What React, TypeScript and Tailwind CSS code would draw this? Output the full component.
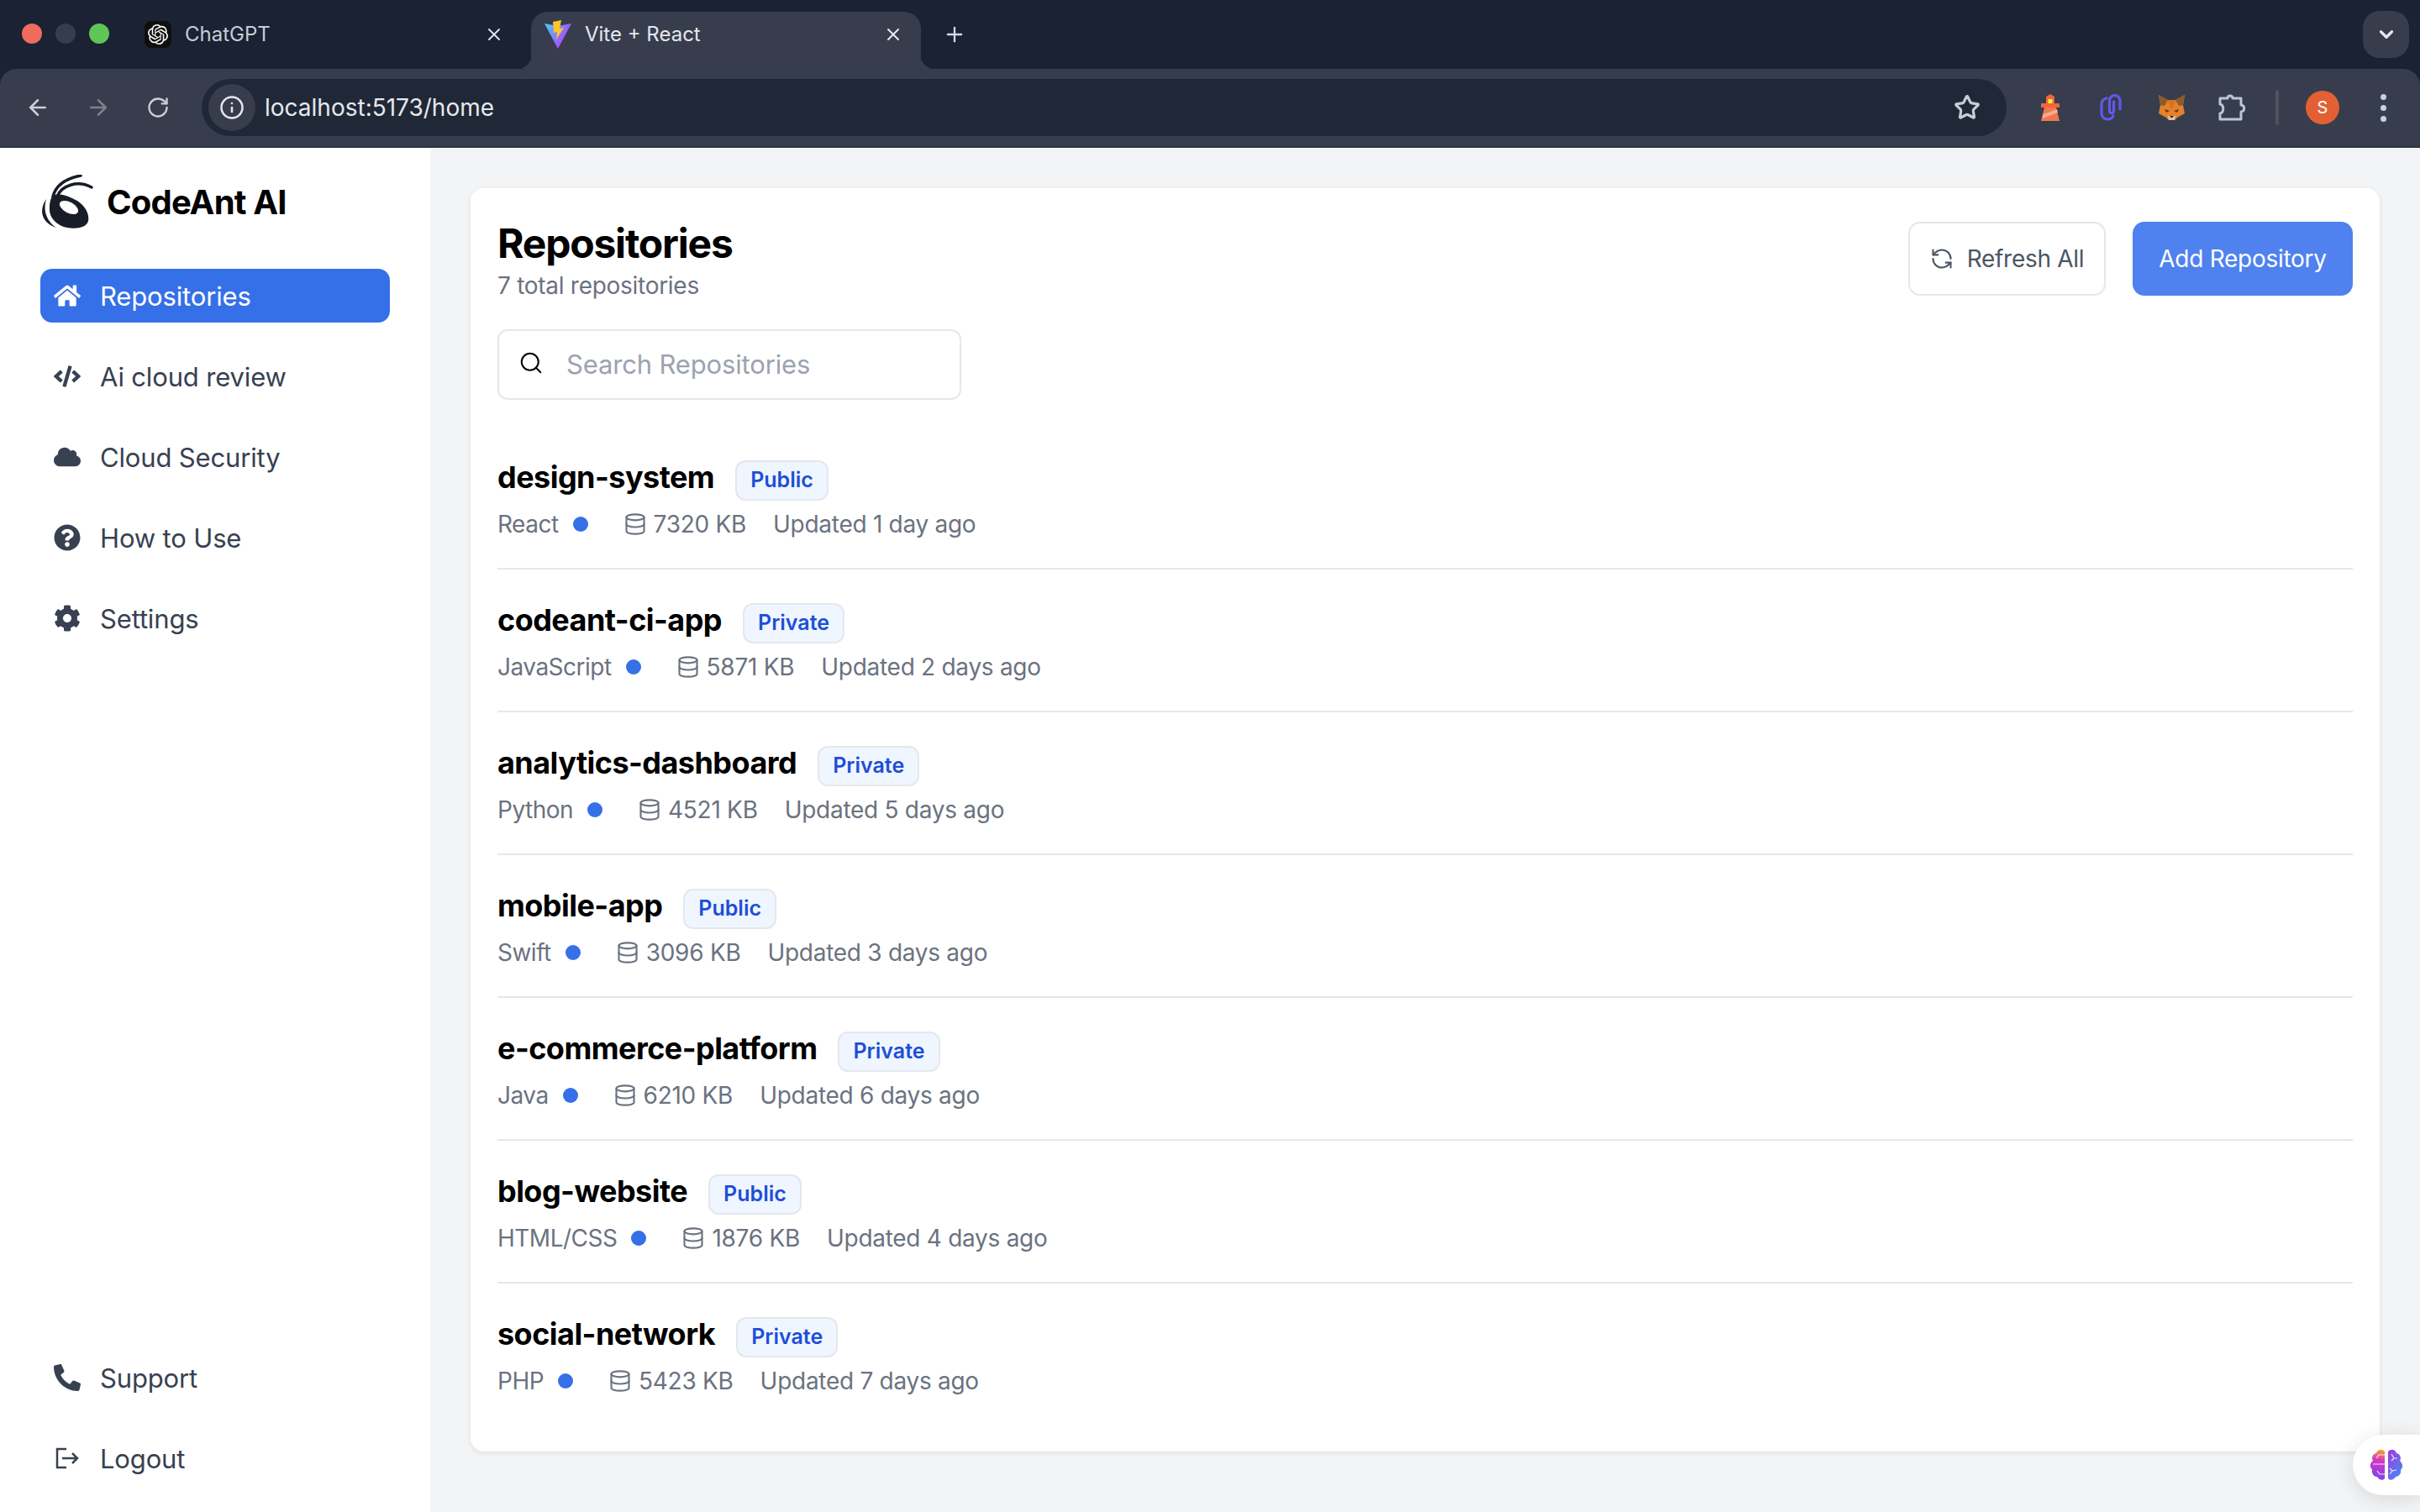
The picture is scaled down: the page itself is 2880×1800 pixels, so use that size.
import { ArrowLeft, ArrowRight, ChevronDown, Database, Info, Plus, RefreshCcw, RotateCw, Search, Star, X } from "lucide-react";
import { FaCloud, FaCode, FaCog, FaHome, FaPhoneAlt, FaQuestionCircle } from "react-icons/fa";
import { SiOpenai } from "react-icons/si";

const repos = [
  { name: "design-system", vis: "Public", lang: "React", size: "7320 KB", updated: "Updated 1 day ago" },
  { name: "codeant-ci-app", vis: "Private", lang: "JavaScript", size: "5871 KB", updated: "Updated 2 days ago" },
  { name: "analytics-dashboard", vis: "Private", lang: "Python", size: "4521 KB", updated: "Updated 5 days ago" },
  { name: "mobile-app", vis: "Public", lang: "Swift", size: "3096 KB", updated: "Updated 3 days ago" },
  { name: "e-commerce-platform", vis: "Private", lang: "Java", size: "6210 KB", updated: "Updated 6 days ago" },
  { name: "blog-website", vis: "Public", lang: "HTML/CSS", size: "1876 KB", updated: "Updated 4 days ago" },
  { name: "social-network", vis: "Private", lang: "PHP", size: "5423 KB", updated: "Updated 7 days ago" },
];

const navTop = [
  { label: "Repositories", icon: <FaHome size={32} />, active: true },
  { label: "Ai cloud review", icon: <FaCode size={32} /> },
  { label: "Cloud Security", icon: <FaCloud size={32} /> },
  { label: "How to Use", icon: <FaQuestionCircle size={32} /> },
  { label: "Settings", icon: <FaCog size={32} /> },
];

const LogoutIcon = () => (
  <svg width="32" height="32" viewBox="0 0 32 32" fill="none" stroke="currentColor" strokeWidth="2.5">
    <path d="M15 5H4v22h11" />
    <path d="M10 16h18M22 10l6 6-6 6" />
  </svg>
);

const AntLogo = () => (
  <svg width="64" height="64" viewBox="0 0 64 64" fill="#181d27">
    <path d="M15 25C21 22 30 24 38 28C50 33 59 44 57 55C55 63 43 65 32 63C21 61 10 52 11 40C11 33 12 28 15 25Z" />
    <ellipse cx="34" cy="39" rx="12" ry="6.5" transform="rotate(28 34 39)" fill="#fff" />
    <path d="M15 26C18 14 28 5 48 1" fill="none" stroke="#181d27" strokeWidth="3.5" strokeLinecap="round" />
    <path d="M20 26C25 13 44 6 61 15" fill="none" stroke="#181d27" strokeWidth="3.5" strokeLinecap="round" />
    <path d="M7 29C-2 42 1 57 19 63C7 55 3 42 7 29Z" />
  </svg>
);

const ViteIcon = () => (
  <svg width="32" height="34" viewBox="0 0 32 34">
    <defs>
      <linearGradient id="viteBody" x1="0" y1="0" x2="1" y2="0.6">
        <stop offset="0" stopColor="#41d1ff" />
        <stop offset="1" stopColor="#bd34fe" />
      </linearGradient>
    </defs>
    <path d="M0 4L16 7L32 4L16 34Z" fill="url(#viteBody)" />
    <path d="M20 0L10 2L11 15L15 14L14 23L23 9L18 10Z" fill="#ffc62a" />
  </svg>
);

const Lighthouse = () => (
  <svg width="22" height="32" viewBox="0 0 22 32">
    <path d="M11 0L16 3V11H6V3Z" fill="#f0653a" />
    <rect x="8.5" y="6" width="5" height="5" fill="#fdf13f" />
    <rect x="0" y="11" width="22" height="5" fill="#f0653a" />
    <path d="M4 16H18L22 32H0Z" fill="#f0784e" />
    <path d="M2.5 24L19 18L20 22L1.5 29Z" fill="#f5ab90" />
  </svg>
);

const ClipIcon = () => (
  <svg width="26" height="32" viewBox="0 0 26 32" fill="none" stroke="#6457ee" strokeWidth="3.2" strokeLinecap="round">
    <path d="M24 18V8C24 4 21 1.6 18 1.6C14 1.6 11.5 4 11.5 8V20C11.5 23.5 16.5 23.5 16.5 20V9" />
    <path d="M8 5C4 6 2 9 2 12V23C2 27 5 30 9 30C12 30 15 28.5 16 26" />
  </svg>
);

const FoxIcon = () => (
  <svg width="31" height="30" viewBox="0 0 31 30">
    <path d="M0 0L11 6H20L31 0L29 12L31 22L22 27L19 30H12L9 27L0 22L2 12Z" fill="#e4812b" />
    <path d="M0 0L11 6L7 13L2 12Z" fill="#8f5a2e" />
    <path d="M31 0L20 6L24 13L29 12Z" fill="#8f5a2e" />
    <path d="M11 6H20L17 16H14Z" fill="#d8721f" />
    <path d="M7 17L13 19L9 21Z" fill="#5c3a1d" />
    <path d="M24 17L18 19L22 21Z" fill="#5c3a1d" />
    <path d="M11 25H20L19 30H12Z" fill="#d9c3ae" />
    <path d="M13 25H18L15.5 27.5Z" fill="#1d1d1d" />
  </svg>
);

const PuzzleIcon = () => (
  <svg width="32" height="32" viewBox="0 0 32 32" fill="none" stroke="#bcc5d8" strokeWidth="3" strokeLinejoin="round">
    <path d="M2 5H11C11 1 17 1 17 5H27V13C32 13 32 21 27 21V30H2V23C7 22 7 13 2 12Z" />
  </svg>
);

const BrainIcon = () => (
  <svg width="40" height="38" viewBox="0 0 40 38">
    <defs>
      <linearGradient id="brainLeft" x1="0.6" y1="0" x2="0.5" y2="1">
        <stop offset="0" stopColor="#f59e2e" />
        <stop offset="0.35" stopColor="#d636c8" />
        <stop offset="1" stopColor="#7a45e6" />
      </linearGradient>
      <linearGradient id="brainRight" x1="0.2" y1="0" x2="0.8" y2="1">
        <stop offset="0" stopColor="#a03fe0" />
        <stop offset="1" stopColor="#3f8cf5" />
      </linearGradient>
    </defs>
    <path d="M18 3C14 -1 9 1 8 5C3 6 2 11 4 14C0 17 0 22 3 24C2 29 5 33 9 33C11 37 16 38 18 35Z" fill="url(#brainLeft)" />
    <path d="M22 3C26 -1 31 1 32 5C37 6 38 11 36 14C40 18 40 22 37 25C38 29 35 33 31 33C29 37 24 38 22 35Z" fill="url(#brainRight)" />
    <g fill="none" stroke="#fff" strokeWidth="1.2" opacity="0.85">
      <path d="M18 7H11L8 11M18 18H4M18 30H12L9 26" />
      <path d="M26 6L29 11L33 11M29 11L26 14M27 26L24 23M27 26L24 30M27 26L32 25" />
    </g>
  </svg>
);

const Flare = ({ side }: { side: "left" | "right" }) => (
  <span
    className={
      side === "left"
        ? "absolute bottom-0 -left-[16px] h-[16px] w-[16px] bg-[#1a2233] rounded-br-[16px] shadow-[6px_6px_0_0_#373d4c]"
        : "absolute bottom-0 -right-[16px] h-[16px] w-[16px] bg-[#1a2233] rounded-bl-[16px] shadow-[-6px_6px_0_0_#373d4c]"
    }
  />
);

const BrowserChrome = () => (
  <div className="h-[176px] shrink-0 bg-[#1a2233] font-[Inter,sans-serif]">
    <div className="flex h-[82px] items-end">
      <div className="flex h-full w-[172px] shrink-0 items-center gap-[16px] pl-[26px] pb-[2px]">
        <span className="h-[24px] w-[24px] rounded-full bg-[#ef6b5e]" />
        <span className="h-[24px] w-[24px] rounded-full bg-[#373d4c]" />
        <span className="h-[24px] w-[24px] rounded-full bg-[#5fc655]" />
      </div>
      <div className="flex h-[68px] w-[460px] shrink-0 items-center pb-[14px]">
        <span className="flex h-[32px] w-[32px] items-center justify-center rounded-[8px] bg-[#0f0f0f] text-white">
          <SiOpenai size={24} />
        </span>
        <span className="ml-[16px] flex-1 text-[24px] text-[#c6ccd8]">ChatGPT</span>
        <X size={24} className="mr-[32px] text-[#dfe3ea]" />
      </div>
      <div className="relative flex h-[68px] w-[464px] shrink-0 items-center rounded-t-[20px] bg-[#373d4c] pl-[16px] pb-[14px]">
        <Flare side="left" />
        <ViteIcon />
        <span className="ml-[16px] flex-1 text-[24px] text-[#e5e8ee]">Vite + React</span>
        <X size={24} className="mr-[21px] text-[#eceef2]" />
        <Flare side="right" />
      </div>
      <div className="flex h-[68px] items-center pb-[14px] pl-[26px]">
        <Plus size={28} className="text-[#d5d9e2]" />
      </div>
      <div className="ml-auto mr-[13px] flex h-[56px] w-[55px] items-center justify-center self-center rounded-[20px] bg-[#373d4c]">
        <ChevronDown size={26} strokeWidth={3} className="text-[#e5e8ee]" />
      </div>
    </div>
    <div className="flex h-[94px] items-center rounded-t-[20px] border-b-[2px] border-[#2f3441] bg-[#373d4c]">
      <div className="flex w-[240px] shrink-0 items-center pl-[30px]">
        <ArrowLeft size={30} className="text-[#c9cfdb]" />
        <ArrowRight size={30} className="ml-[42px] text-[#7b818f]" />
        <RotateCw size={28} className="ml-[42px] text-[#c9cfdb]" />
      </div>
      <div className="flex h-[68px] w-[2148px] shrink-0 items-center rounded-full bg-[#202736] pl-[8px] pr-[31px]">
        <span className="flex h-[56px] w-[56px] items-center justify-center rounded-full bg-[#373d4c]">
          <Info size={30} className="text-[#e5e8ee]" />
        </span>
        <span className="ml-[11px] flex-1 text-[28px] text-[#e5e8ee]">localhost:5173/home</span>
        <Star size={32} strokeWidth={2.4} className="text-[#c9ccd3]" />
      </div>
      <div className="flex items-center pl-[16px]">
        <span className="flex w-[72px] justify-center"><Lighthouse /></span>
        <span className="flex w-[72px] justify-center"><ClipIcon /></span>
        <span className="flex w-[72px] justify-center"><FoxIcon /></span>
        <span className="flex w-[72px] justify-center"><PuzzleIcon /></span>
        <span className="flex w-[36px] justify-center">
          <span className="h-[42px] w-[4px] rounded-full bg-[#4d5361]" />
        </span>
        <span className="flex w-[72px] justify-center">
          <span className="flex h-[40px] w-[40px] items-center justify-center rounded-full bg-[#e26033] text-[20px] text-white">
            S
          </span>
        </span>
        <span className="flex w-[72px] flex-col items-center gap-[6px]">
          <span className="h-[7px] w-[7px] rounded-full bg-[#c9d2e2]" />
          <span className="h-[7px] w-[7px] rounded-full bg-[#c9d2e2]" />
          <span className="h-[7px] w-[7px] rounded-full bg-[#c9d2e2]" />
        </span>
      </div>
    </div>
  </div>
);

const NavItem = ({ label, icon, active }: { label: string; icon: React.ReactNode; active?: boolean }) => (
  <div
    className={`flex h-[64px] items-center gap-[23px] rounded-[14px] pl-[16px] text-[31px] tracking-[-0.005em] ${
      active ? "bg-[#3670e8] text-white" : "text-[#374151]"
    }`}
  >
    <span className="flex w-[32px] shrink-0 justify-center">{icon}</span>
    <span className="pt-[2px]">{label}</span>
  </div>
);

const Sidebar = () => (
  <aside className="flex w-[512px] shrink-0 flex-col justify-between bg-white px-[48px] pt-[32px] pb-[32px]">
    <div>
      <div className="flex items-center gap-[15px]">
        <AntLogo />
        <span className="pt-[2px] text-[40px] font-bold tracking-[-0.02em] text-black">CodeAnt AI</span>
      </div>
      <nav className="mt-[48px] flex flex-col gap-[32px]">
        {navTop.map((item) => (
          <NavItem key={item.label} {...item} />
        ))}
      </nav>
    </div>
    <div className="flex flex-col gap-[32px]">
      <NavItem label="Support" icon={<FaPhoneAlt size={32} />} />
      <NavItem label="Logout" icon={<LogoutIcon />} />
    </div>
  </aside>
);

const RepoRow = ({ repo, last }: { repo: (typeof repos)[number]; last: boolean }) => (
  <div className={`pt-[32px] pb-[32px] ${last ? "" : "border-b-[2px] border-[#e5e7eb]"}`}>
    <div className="flex h-[56px] items-center gap-[25px]">
      <h2 className="text-[36px] font-bold tracking-[-0.015em] text-black">{repo.name}</h2>
      <span className="mt-[8px] flex h-[48px] items-center rounded-[12px] border-[2px] border-[#e5e7eb] bg-[#eff6ff] px-[16px] text-[25px] font-semibold text-[#1d4ed8]">
        {repo.vis}
      </span>
    </div>
    <div className="mt-[8px] flex h-[40px] items-center text-[28px] tracking-[-0.01em] text-[#6b7280]">
      <span className="tracking-[-0.018em]">{repo.lang}</span>
      <span className="ml-[17px] h-[18px] w-[18px] rounded-full bg-[#3670e8]" />
      <Database size={28} strokeWidth={1.8} className="ml-[42px]" />
      <span className="ml-[8px]">{repo.size}</span>
      <span className="ml-[32px]">{repo.updated}</span>
    </div>
  </div>
);

export default function App() {
  return (
    <div className="relative flex h-[1800px] w-[2880px] flex-col overflow-hidden bg-[#f3f4f6] font-[Inter,sans-serif]">
      <BrowserChrome />
      <div className="flex min-h-0 flex-1">
        <Sidebar />
        <main className="flex-1 px-[48px] pt-[48px]">
          <div className="rounded-[16px] bg-white px-[32px] pt-[40px] pb-[32px] shadow-[0_2px_6px_rgba(0,0,0,0.08)]">
            <div className="flex items-start justify-between">
              <div>
                <h1 className="text-[48px] leading-[52px] font-bold tracking-tight text-black">Repositories</h1>
                <p className="mt-[4px] text-[28px] leading-[40px] tracking-[-0.01em] text-[#6b7280]">7 total repositories</p>
              </div>
              <div className="flex gap-[32px]">
                <button className="flex h-[88px] w-[235px] items-center justify-center gap-[16px] rounded-[14px] border-[2px] border-[#e5e7eb] bg-white text-[28px] tracking-[-0.01em] text-[#4b5563]">
                  <RefreshCcw size={28} strokeWidth={1.8} />
                  Refresh All
                </button>
                <button className="h-[88px] w-[262px] rounded-[14px] bg-[#4f82ee] text-[28px] tracking-[-0.01em] text-white">
                  Add Repository
                </button>
              </div>
            </div>
            <div className="mt-[32px] flex h-[84px] w-[552px] items-center rounded-[12px] border-[2px] border-[#e5e7eb] pl-[23px]">
              <Search size={30} strokeWidth={1.6} className="-mt-[4px] text-black" />
              <span className="ml-[27px] text-[31px] tracking-[-0.005em] text-[#9ca3af]">Search Repositories</span>
            </div>
            <div className="mt-[32px]">
              {repos.map((repo, i) => (
                <RepoRow key={repo.name} repo={repo} last={i === repos.length - 1} />
              ))}
            </div>
          </div>
        </main>
      </div>
      <div className="absolute top-[1708px] right-0 flex h-[72px] w-[80px] items-center rounded-l-full bg-white pl-[20px] shadow-[0_4px_24px_rgba(0,0,0,0.12)]">
        <BrainIcon />
      </div>
    </div>
  );
}
